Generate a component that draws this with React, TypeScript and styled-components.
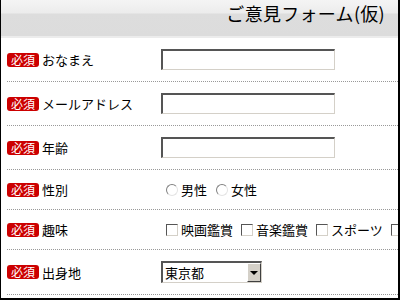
import React from 'react';
import styled, { createGlobalStyle } from 'styled-components';

const GlobalStyle = createGlobalStyle`
  html, body {
    margin: 0;
    padding: 0;
    background: #fff;
  }
  body {
    font-family: "Noto Sans CJK JP", "DejaVu Sans", sans-serif;
    color: #000;
  }
`;

const Frame = styled.div`
  width: 400px;
  height: 300px;
  box-sizing: border-box;
  border-left: 1px solid #000;
  border-right: 2px solid #000;
  border-bottom: 2px solid #000;
  overflow: hidden;
  background: #fff;
`;

const Header = styled.header`
  height: 36px;
  border-bottom: 2px solid #ececec;
  background: linear-gradient(to bottom, #f4f4f4 0, #ececec 13px, #dddddd 14px, #dcdcdc 100%);
  display: flex;
  justify-content: flex-end;
  align-items: flex-start;
  padding-right: 13px;
`;

const Title = styled.h1`
  margin: 0;
  font-size: 18px;
  font-weight: normal;
  line-height: 26px;
  letter-spacing: 0.3px;
`;

const Row = styled.div`
  display: grid;
  grid-template-columns: 154px minmax(0, 1fr);
  align-items: center;
  margin-left: 6px;
  padding: 11px 0;
  border-bottom: 1px dotted #999;
  white-space: nowrap;
`;

const LabelCell = styled.div`
  display: flex;
  align-items: center;
  gap: 3px;
`;

const Badge = styled.span`
  display: inline-block;
  background: #cc0000;
  color: #fff;
  font-size: 12px;
  line-height: 14px;
  padding: 0 4px;
  border-radius: 3px;
`;

const LabelText = styled.span`
  font-size: 13px;
  line-height: 17px;
`;

const Control = styled.div`
  display: flex;
  align-items: center;
  overflow: hidden;
  font-size: 13px;
  line-height: 17px;
`;

const TextBox = styled.input`
  width: 174px;
  height: 21px;
  box-sizing: border-box;
  margin: 0;
  padding: 0 2px;
  border-top: 2px solid #555;
  border-left: 2px solid #555;
  border-bottom: 1px solid #d4d0c8;
  border-right: 1px solid #d4d0c8;
  background: #fff;
  outline: none;
`;

const Option = styled.label<{ $gap: number }>`
  display: inline-flex;
  align-items: center;
  margin-right: ${p => p.$gap}px;
`;

const Radio = styled.input`
  appearance: none;
  width: 12px;
  height: 12px;
  box-sizing: border-box;
  margin: 0 3px 0 5px;
  border-radius: 50%;
  border: 1px solid;
  border-color: #808080 #e4e4e4 #e4e4e4 #808080;
  background: #fff;
`;

const Check = styled.input`
  appearance: none;
  width: 12px;
  height: 12px;
  box-sizing: border-box;
  margin: 0 3px 0 5px;
  border: 1px solid;
  border-color: #555 #d4d0c8 #d4d0c8 #555;
  background: #fff;
`;

const SelectBox = styled.div`
  display: flex;
  width: 101px;
  height: 22px;
  box-sizing: border-box;
  border-top: 2px solid #555;
  border-left: 2px solid #555;
  border-bottom: 1px solid #d4d0c8;
  border-right: 1px solid #d4d0c8;
  background: #fff;
`;

const SelectText = styled.span`
  flex: 1;
  padding-left: 2px;
  font-size: 13px;
  line-height: 19px;
`;

const ArrowButton = styled.span`
  width: 14px;
  box-sizing: border-box;
  background: #d4d0c8;
  border-top: 1px solid #fff;
  border-left: 1px solid #fff;
  border-right: 1px solid #404040;
  border-bottom: 1px solid #404040;
  display: flex;
  align-items: center;
  justify-content: center;

  &::after {
    content: '';
    border-left: 4px solid transparent;
    border-right: 4px solid transparent;
    border-top: 4px solid #000;
  }
`;

const Field: React.FC<{ label: string; children: React.ReactNode }> = ({ label, children }) => (
  <Row>
    <LabelCell>
      <Badge>必須</Badge>
      <LabelText>{label}</LabelText>
    </LabelCell>
    <Control>{children}</Control>
  </Row>
);

const hobbies = ['映画鑑賞', '音楽鑑賞', 'スポーツ'];

export default function App() {
  return (
    <Frame>
      <GlobalStyle />
      <Header>
        <Title>ご意見フォーム(仮)</Title>
      </Header>
      <Field label="おなまえ">
        <TextBox type="text" />
      </Field>
      <Field label="メールアドレス">
        <TextBox type="text" />
      </Field>
      <Field label="年齢">
        <TextBox type="text" />
      </Field>
      <Field label="性別">
        <Option $gap={4}>
          <Radio type="radio" name="sex" />
          男性
        </Option>
        <Option $gap={4}>
          <Radio type="radio" name="sex" />
          女性
        </Option>
      </Field>
      <Field label="趣味">
        {hobbies.map(h => (
          <Option key={h} $gap={3}>
            <Check type="checkbox" />
            {h}
          </Option>
        ))}
        <Option $gap={0}>
          <Check type="checkbox" />
        </Option>
      </Field>
      <Field label="出身地">
        <SelectBox>
          <SelectText>東京都</SelectText>
          <ArrowButton />
        </SelectBox>
      </Field>
    </Frame>
  );
}
